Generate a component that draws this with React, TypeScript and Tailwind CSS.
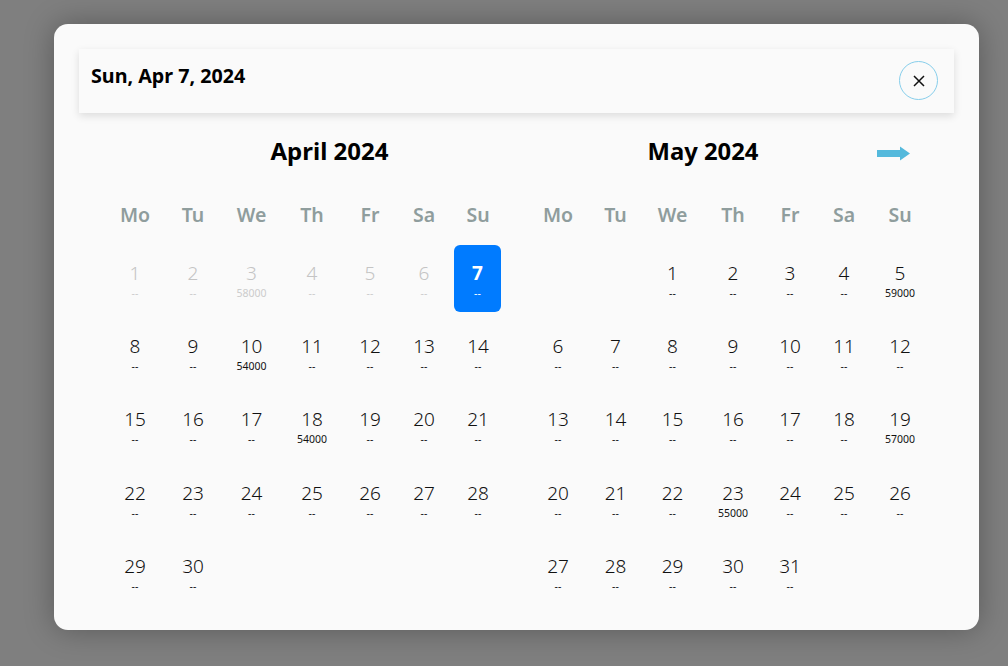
import React from 'react';

type Day = { n: number; price?: string };

const WEEK = ['Mo', 'Tu', 'We', 'Th', 'Fr', 'Sa', 'Su'];

const aprilPrices: Record<number, string> = { 3: '58000', 10: '54000', 18: '54000' };
const mayPrices: Record<number, string> = { 5: '59000', 19: '57000', 23: '55000' };

const buildDays = (count: number, prices: Record<number, string>): Day[] =>
  Array.from({ length: count }, (_, i) => ({ n: i + 1, price: prices[i + 1] }));

const DayCell = ({ day, past, selected }: { day: Day; past?: boolean; selected?: boolean }) => {
  const numberColor = selected ? 'text-white font-bold' : past ? 'text-[#c4c4c4]' : 'text-[#111111]';
  const priceColor = selected ? 'text-white' : past ? 'text-[#cccccc]' : 'text-[#111111]';
  return (
    <div className="flex h-[73.2px] items-start justify-center">
      <div className={`flex h-[67px] w-[47px] flex-col items-center pt-[13px] ${selected ? 'mr-[1px] rounded-[6px] bg-[#007bff]' : ''}`}>
        <span className={`text-[19px] leading-[30px] font-[350] ${numberColor}`}>{day.n}</span>
        <span className={`text-[10.5px] leading-[10px] ${priceColor}`}>{day.price ?? '--'}</span>
      </div>
    </div>
  );
};

const MonthGrid = ({
  columns,
  offset,
  days,
  pastUntil = 0,
  selected,
}: {
  columns: string;
  offset: number;
  days: Day[];
  pastUntil?: number;
  selected?: number;
}) => (
  <div className={`grid ${columns}`}>
    {WEEK.map((w) => (
      <div key={w} className="flex h-[82px] items-start justify-center pt-[38px] text-[19.5px] leading-[28px] font-semibold text-[#8f9d9d]">
        {w}
      </div>
    ))}
    {Array.from({ length: offset }, (_, i) => (
      <div key={`blank-${i}`} />
    ))}
    {days.map((d) => (
      <DayCell key={d.n} day={d} past={d.n < pastUntil} selected={d.n === selected} />
    ))}
  </div>
);

export default function App() {
  return (
    <div className="h-[666px] w-[1008px] overflow-hidden bg-[#7f7f7f] pt-[24px] pl-[54px] font-['Noto_Sans',sans-serif]">
      <div className="h-[606px] w-[925px] rounded-[14px] bg-[#fafafa] px-[25px] pt-[25px] shadow-[0_0_30px_rgba(0,0,0,0.3)]">
        {/* Header */}
        <div className="flex h-[64px] w-[875px] justify-between pt-[12px] pr-[16px] pl-[12px] shadow-[0_3px_8px_rgba(0,0,0,0.12)]">
          <h2 className="text-[19.7px] leading-[30px] font-bold text-black">Sun, Apr 7, 2024</h2>
          <button className="flex size-[39px] items-center justify-center rounded-full border border-[#87ceeb]">
            <svg width="12" height="12" viewBox="0 0 12 12" fill="none" stroke="#111" strokeWidth="1.5">
              <path d="M1 1l10 10M11 1L1 11" />
            </svg>
          </button>
        </div>

        {/* Calendars */}
        <div className="flex pl-[27px]">
          <div className="w-[399px]">
            <h3 className="h-[50px] pt-[19px] pl-[48px] text-center text-[24px] leading-[38px] font-bold text-black">April 2024</h3>
            <MonthGrid
              columns="grid-cols-[58px_58px_59px_62px_54px_54px_54px]"
              offset={0}
              days={buildDays(30, aprilPrices)}
              pastUntil={7}
              selected={7}
            />
          </div>
          <div className="ml-[24px] w-[398px]">
            <div className="flex h-[50px] pt-[19px]">
              <h3 className="flex-1 text-center text-[23.8px] leading-[38px] font-bold text-black">May 2024</h3>
              <svg className="mt-[14px] mr-[17px]" width="33" height="15" viewBox="0 0 33 15" fill="#54b9dc">
                <path d="M0 4h23V0.5l10 7-10 7V11H0z" />
              </svg>
            </div>
            <MonthGrid
              columns="grid-cols-[58px_57px_57px_64px_50px_58px_54px]"
              offset={2}
              days={buildDays(31, mayPrices)}
            />
          </div>
        </div>
      </div>
    </div>
  );
}
